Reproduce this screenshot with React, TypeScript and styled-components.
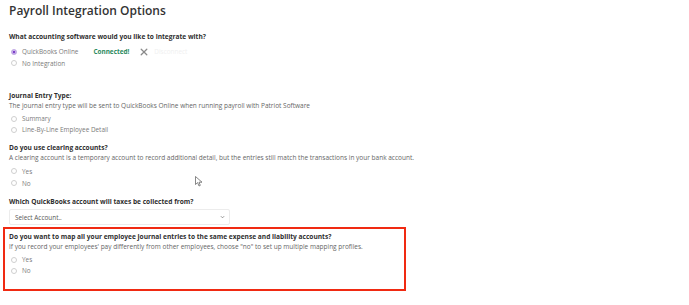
import styled, { createGlobalStyle } from "styled-components";

const GlobalStyle = createGlobalStyle`
  html, body {
    margin: 0;
    padding: 0;
    background: #ffffff;
  }
  body {
    font-family: "Open Sans", "Noto Sans", Arial, sans-serif;
    color: #333333;
    -webkit-font-smoothing: antialiased;
  }
`;

type RadioOption = { label: string; checked?: boolean };

const RadioList: React.FC<{ options: RadioOption[]; rowHeight?: number }> = ({ options, rowHeight }) => (
  <Radios>
    {options.map((opt) => (
      <RadioRow key={opt.label} $h={rowHeight}>
        <Circle $checked={opt.checked} />
        <RadioLabel>{opt.label}</RadioLabel>
      </RadioRow>
    ))}
  </Radios>
);

export default function App() {
  return (
    <>
      <GlobalStyle />
      <Page>
        <Title>Payroll Integration Options</Title>

        <Section $gapAfter={22}>
          <Question>What accounting software would you like to integrate with?</Question>
          <Radios $top={4}>
            <RadioRow>
              <Circle $checked />
              <RadioLabel>QuickBooks Online</RadioLabel>
              <Connected>Connected!</Connected>
              <CloseIcon viewBox="0 0 10 10">
                <path d="M1.5 1.5 L8.5 8.5 M8.5 1.5 L1.5 8.5" stroke="#8a8a8a" strokeWidth="1.6" strokeLinecap="round" />
              </CloseIcon>
              <Faint>Disconnect</Faint>
            </RadioRow>
            <RadioRow>
              <Circle />
              <RadioLabel>No Integration</RadioLabel>
            </RadioRow>
          </Radios>
        </Section>

        <Section $gapAfter={8}>
          <Question>Journal Entry Type:</Question>
          <Description>
            The journal entry type will be sent to QuickBooks Online when running payroll with Patriot Software
          </Description>
          <RadioList options={[{ label: "Summary" }, { label: "Line-By-Line Employee Detail" }]} rowHeight={11} />
        </Section>

        <Section $gapAfter={8}>
          <Question>Do you use clearing accounts?</Question>
          <Description>
            A clearing account is a temporary account to record additional detail, but the entries still match the transactions in your bank account.
          </Description>
          <RadioList options={[{ label: "Yes" }, { label: "No" }]} rowHeight={12} />
        </Section>

        <Section $gapAfter={2}>
          <Question>Which QuickBooks account will taxes be collected from?</Question>
          <SelectBox>
            <span>Select Account..</span>
            <Chevron viewBox="0 0 6 4">
              <path d="M1 1 L3 3 L5 1" stroke="#666" strokeWidth="0.8" fill="none" />
            </Chevron>
          </SelectBox>
        </Section>

        <Highlight>
          <Question>
            Do you want to map all your employee journal entries to the same expense and liability accounts?
          </Question>
          <Description>
            If you record your employees' pay differently from other employees, choose "no" to set up multiple mapping profiles.
          </Description>
          <RadioList options={[{ label: "Yes" }, { label: "No" }]} rowHeight={11} />
        </Highlight>

        <Cursor viewBox="0 0 8 11">
          <path d="M0.5 0.5 L0.5 8.5 L2.6 6.6 L4 10 L5.3 9.4 L4 6.2 L7 6.2 Z" fill="#fff" stroke="#555" strokeWidth="0.7" />
        </Cursor>
      </Page>
    </>
  );
}

const Page = styled.div`
  position: relative;
  width: 689px;
  height: 305px;
  box-sizing: border-box;
  padding: 3px 0 0 9px;
  overflow: hidden;
`;

const Title = styled.h1`
  margin: 0 0 13px;
  font-size: 12px;
  line-height: 16px;
  font-weight: 600;
  color: #333333;
`;

const Section = styled.div<{ $gapAfter: number }>`
  display: flex;
  flex-direction: column;
  margin-bottom: ${(p) => p.$gapAfter}px;
`;

const Question = styled.div`
  font-size: 6.6px;
  line-height: 10px;
  font-weight: 700;
  color: #2f2f2f;
  white-space: nowrap;
`;

const Description = styled.div`
  font-size: 6.5px;
  line-height: 10px;
  color: #666666;
  white-space: nowrap;
`;

const Radios = styled.div<{ $top?: number }>`
  display: flex;
  flex-direction: column;
  margin-top: ${(p) => p.$top ?? 2}px;
`;

const RadioRow = styled.div<{ $h?: number }>`
  display: flex;
  align-items: center;
  height: ${(p) => p.$h ?? 11.5}px;
  padding-left: 2px;
`;

const Circle = styled.span<{ $checked?: boolean }>`
  width: 6px;
  height: 6px;
  box-sizing: border-box;
  border-radius: 50%;
  border: 1px solid ${(p) => (p.$checked ? "#c9b5e8" : "#cfcfcf")};
  background: ${(p) => (p.$checked ? "#7c3fc8" : "#ffffff")};
  box-shadow: ${(p) => (p.$checked ? "inset 0 0 0 0.5px #fff" : "none")};
  flex-shrink: 0;
`;

const RadioLabel = styled.span`
  margin-left: 5px;
  font-size: 6.4px;
  color: #7a7a7a;
  white-space: nowrap;
`;

const Connected = styled.span`
  margin-left: 15px;
  font-size: 6.4px;
  font-weight: 700;
  color: #2b8a5e;
`;

const CloseIcon = styled.svg`
  width: 8px;
  height: 8px;
  margin-left: 11px;
`;

const Faint = styled.span`
  margin-left: 6px;
  font-size: 6.4px;
  color: #f0f0f0;
`;

const SelectBox = styled.div`
  display: flex;
  align-items: center;
  justify-content: space-between;
  box-sizing: border-box;
  width: 221px;
  height: 16px;
  margin-top: 2px;
  padding: 0 4px 0 5px;
  border: 1px solid #ececec;
  border-radius: 2px;
  font-size: 6.4px;
  color: #555555;
`;

const Chevron = styled.svg`
  width: 5px;
  height: 4px;
`;

const Highlight = styled.div`
  display: flex;
  flex-direction: column;
  box-sizing: border-box;
  width: 403px;
  height: 64px;
  margin-left: -6px;
  padding: 3px 4px 0;
  border: 2px solid #f02a12;
`;

const Cursor = styled.svg`
  position: absolute;
  left: 195px;
  top: 176px;
  width: 8px;
  height: 11px;
`;
